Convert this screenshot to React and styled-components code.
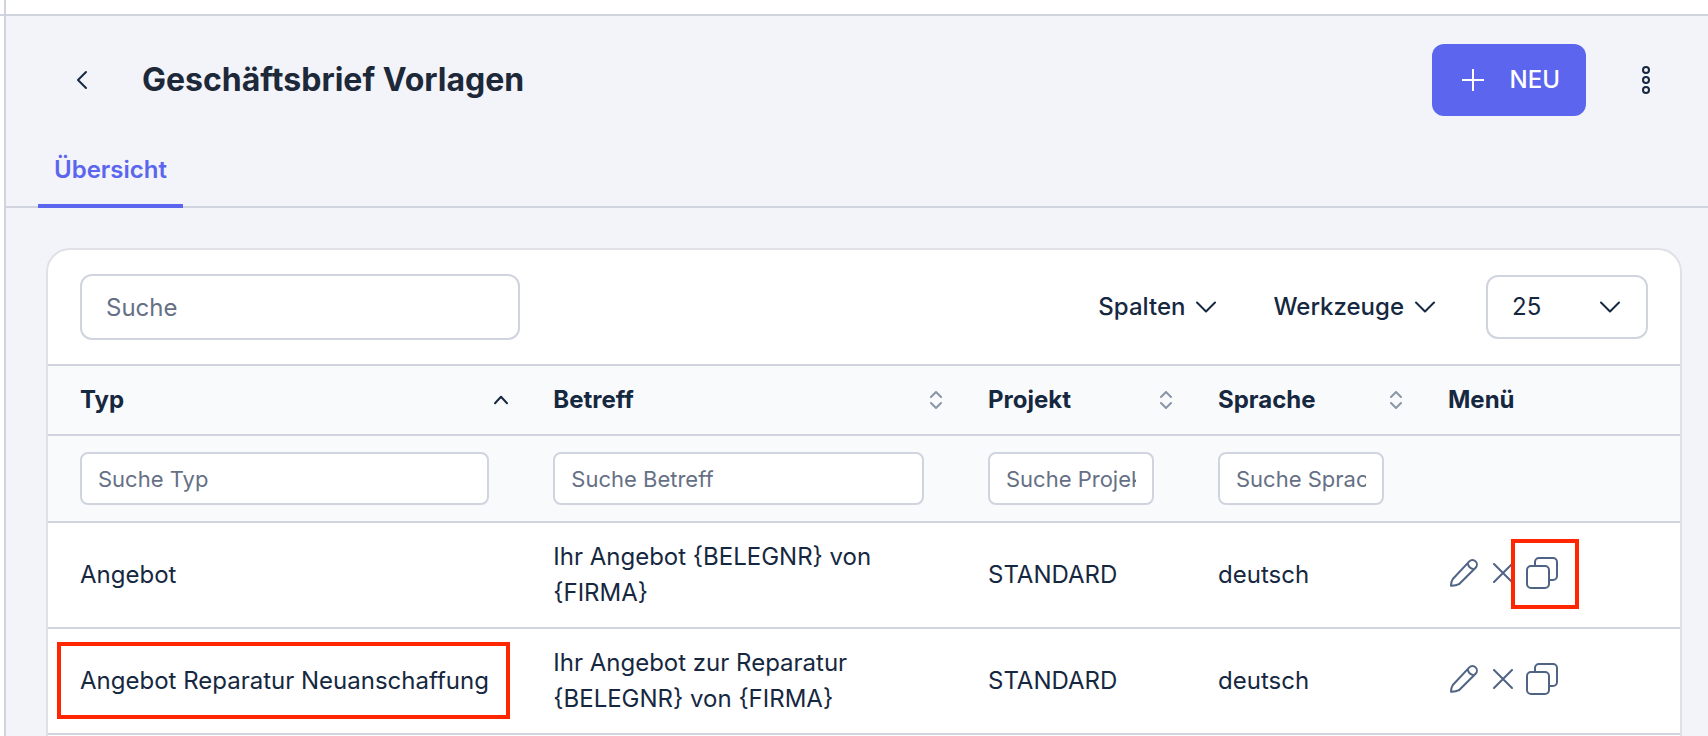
import React from "react";
import styled, { createGlobalStyle, css } from "styled-components";

const color = {
  ink: "#16283f",
  title: "#1d2939",
  accent: "#5b65ee",
  line: "#cfd4de",
  cardLine: "#dfe1e7",
  page: "#f3f4fa",
  head: "#f9fafc",
  muted: "#667085",
  sort: "#8b95a5",
  icon: "#4f6484",
  mark: "#ff2600",
};

const GlobalStyle = createGlobalStyle`
  *, *::before, *::after { box-sizing: border-box; }
  body {
    margin: 0;
    background: #fff;
    color: ${color.ink};
    font-family: Inter, "Liberation Sans", sans-serif;
    font-size: 24px;
    line-height: 36px;
    overflow: hidden;
  }
  button, input, select { font: inherit; color: inherit; }
`;

const Shell = styled.div`
  display: flex;
  flex-direction: column;
  height: 100vh;
  overflow: hidden;
`;

const TopBar = styled.div`
  flex: none;
  height: 16px;
  padding-left: 4px;
  border-bottom: 2px solid ${color.line};
  &::before {
    content: "";
    display: block;
    width: 2px;
    height: 14px;
    background: ${color.line};
  }
`;

const Main = styled.main`
  flex: 1;
  min-height: 0;
  margin-left: 4px;
  border-left: 2px solid ${color.line};
  background: ${color.page};
`;

const PageHeader = styled.header`
  display: flex;
  align-items: center;
  padding: 28px 32px 0 46px;
`;

const IconButton = styled.button`
  display: inline-flex;
  align-items: center;
  justify-content: center;
  width: 60px;
  height: 60px;
  padding: 0;
  border: 0;
  background: none;
  cursor: pointer;
`;

const Title = styled.h1`
  flex: 1;
  margin: 0 0 0 30px;
  color: ${color.title};
  font-size: 32px;
  font-weight: 700;
  line-height: 40px;
`;

const NewButton = styled.button`
  display: inline-flex;
  align-items: center;
  gap: 26px;
  height: 72px;
  margin-right: 30px;
  padding: 0 26px 0 30px;
  border: 0;
  border-radius: 12px;
  background: ${color.accent};
  color: #fff;
  font-weight: 500;
  cursor: pointer;
`;

const Tabs = styled.nav`
  display: flex;
  height: 92px;
  padding-left: 32px;
  border-bottom: 2px solid ${color.line};
`;

const Tab = styled.a`
  height: 92px;
  padding: 36px 16px 0;
  border-bottom: 4px solid ${color.accent};
  color: ${color.accent};
  font-weight: 600;
  text-decoration: none;
`;

const Card = styled.section`
  height: 640px;
  margin: 40px 26px 0 40px;
  border: 2px solid ${color.cardLine};
  border-radius: 24px;
  background: #fff;
  overflow: hidden;
`;

const Toolbar = styled.div`
  display: flex;
  align-items: center;
  padding: 24px 32px;
`;

const field = css`
  border: 2px solid ${color.line};
  background: #fff;
  outline: none;
  &::placeholder {
    color: ${color.muted};
    opacity: 1;
  }
`;

const SearchInput = styled.input`
  ${field}
  width: 440px;
  height: 66px;
  margin-right: auto;
  padding: 0 24px;
  border-radius: 12px;
`;

const MenuButton = styled.button`
  display: inline-flex;
  align-items: center;
  gap: 10px;
  margin-right: ${(p) => p.$gap}px;
  padding: 0;
  border: 0;
  background: none;
  font-weight: 500;
  cursor: pointer;
`;

const SelectBox = styled.div`
  display: grid;
  align-items: center;
  width: 162px;
  > * { grid-area: 1 / 1; }
  > svg {
    justify-self: end;
    margin-right: 27px;
    pointer-events: none;
  }
`;

const PageSize = styled.select`
  ${field}
  appearance: none;
  width: 100%;
  height: 64px;
  padding: 0 24px;
  border-radius: 12px;
`;

const Table = styled.table`
  width: 100%;
  table-layout: fixed;
  border-collapse: separate;
  border-spacing: 0;
`;

const Col = styled.col`
  width: ${(p) => p.$width};
`;

const HeadCell = styled.th`
  padding: 16px 11px 16px 32px;
  border-top: 2px solid ${color.line};
  background: ${color.head};
  font-weight: 700;
  text-align: left;
`;

const HeadLabel = styled.div`
  display: flex;
  align-items: center;
  justify-content: space-between;
`;

const SortButton = styled.button`
  display: inline-flex;
  padding: 0;
  border: 0;
  background: none;
  cursor: pointer;
`;

const FilterCell = styled.td`
  padding: 16px 32px;
  border-top: 2px solid ${color.line};
  border-bottom: 2px solid ${color.line};
  background: ${color.head};
`;

const FilterInput = styled.input`
  ${field}
  display: block;
  width: 100%;
  height: 53px;
  padding: 0 16px;
  border-radius: 8px;
  font-size: 22px;
`;

const Cell = styled.td`
  padding: 16px 32px;
  border-bottom: 2px solid ${color.line};
  white-space: ${(p) => (p.$single ? "nowrap" : "normal")};
`;

const marked = css`
  position: relative;
  &::after {
    content: "";
    position: absolute;
    inset: ${(p) => p.$inset};
    border: 4px solid ${color.mark};
    pointer-events: none;
  }
`;

const CellText = styled.span`
  display: inline-block;
  ${(p) => p.$marked && marked}
`;

const Actions = styled.div`
  display: flex;
  align-items: center;
  height: 32px;
  margin: 0 0 4px 2px;
`;

const ActionButton = styled.button`
  display: inline-flex;
  margin-right: ${(p) => p.$gap || 0}px;
  padding: 0;
  border: 0;
  background: none;
  color: ${color.icon};
  cursor: pointer;
  ${(p) => p.$marked && marked}
`;

const stroke = {
  fill: "none",
  stroke: "currentColor",
  strokeWidth: 2,
  strokeLinecap: "round",
  strokeLinejoin: "round",
  "aria-hidden": true,
};

const ChevronLeft = () => (
  <svg width="12" height="20" viewBox="0 0 12 20" {...stroke}>
    <path d="M10 2 2 10l8 8" />
  </svg>
);

const ChevronDown = () => (
  <svg width="22" height="14" viewBox="0 0 22 14" {...stroke}>
    <path d="m2 2.500 9 9 9-9" />
  </svg>
);

const Plus = () => (
  <svg width="22" height="22" viewBox="0 0 22 22" {...stroke} strokeLinecap="butt">
    <path d="M11 0v22M0 11h22" />
  </svg>
);

const Dots = () => (
  <svg width="8" height="28" viewBox="0 0 8 28" {...stroke}>
    <circle cx="4" cy="4" r="3" />
    <circle cx="4" cy="14" r="3" />
    <circle cx="4" cy="24" r="3" />
  </svg>
);

const SortIcon = ({ active }) =>
  active ? (
    <svg width="18" height="18" viewBox="0 0 18 18" {...stroke}>
      <path d="m3 12.200 6-6.400 6 6.400" />
    </svg>
  ) : (
    <svg width="18" height="18" viewBox="0 0 18 18" {...stroke} stroke={color.sort}>
      <path d="m4 6 5-5 5 5M4 12l5 5 5-5" />
    </svg>
  );

const Pencil = () => (
  <svg width="28" height="28" viewBox="0 0 28 28" {...stroke}>
    <path d="M1 26.800c0-2.400.6-5 1.800-6.800L19.300 2.400a4.400 4.400 0 0 1 6.300 6.300L9 25.200c-2 1.100-5 1.700-8 1.600ZM17.800 4.200c.4 3.200 2.600 5.400 5.800 6" />
  </svg>
);

const Cross = () => (
  <svg width="20" height="20" viewBox="0 0 20 20" {...stroke}>
    <path d="m1 1 18 18M19 1 1 19" />
  </svg>
);

const Copy = () => (
  <svg width="32" height="32" viewBox="0 0 32 32" {...stroke}>
    <rect x="1" y="9" width="22" height="22" rx="4" />
    <path d="M9 9V5a4 4 0 0 1 4-4h14a4 4 0 0 1 4 4v14a4 4 0 0 1-4 4h-4" />
  </svg>
);

const columns = [
  { label: "Typ", width: "29%", sort: "ascending" },
  { label: "Betreff", width: "auto", sort: "none" },
  { label: "Projekt", width: "230px", sort: "none" },
  { label: "Sprache", width: "230px", sort: "none" },
  { label: "Menü", width: "264px" },
];

const rows = [
  {
    typ: "Angebot",
    betreff: "Ihr Angebot {BELEGNR} von {FIRMA}",
    projekt: "STANDARD",
    sprache: "deutsch",
    markCopy: true,
  },
  {
    typ: "Angebot Reparatur Neuanschaffung",
    betreff: "Ihr Angebot zur Reparatur {BELEGNR} von {FIRMA}",
    projekt: "STANDARD",
    sprache: "deutsch",
    markTyp: true,
  },
];

export default function App() {
  return (
    <>
      <GlobalStyle />
      <Shell>
        <TopBar />
        <Main>
          <PageHeader>
            <IconButton type="button" aria-label="Zurück">
              <ChevronLeft />
            </IconButton>
            <Title>Geschäftsbrief Vorlagen</Title>
            <NewButton type="button">
              <Plus />
              NEU
            </NewButton>
            <IconButton type="button" aria-label="Weitere Aktionen">
              <Dots />
            </IconButton>
          </PageHeader>
          <Tabs>
            <Tab href="#uebersicht" aria-current="page">
              Übersicht
            </Tab>
          </Tabs>
          <Card>
            <Toolbar>
              <SearchInput type="text" placeholder="Suche" aria-label="Suche" />
              <MenuButton type="button" $gap={56}>
                Spalten
                <ChevronDown />
              </MenuButton>
              <MenuButton type="button" $gap={50}>
                Werkzeuge
                <ChevronDown />
              </MenuButton>
              <SelectBox>
                <PageSize aria-label="Einträge pro Seite" defaultValue="25">
                  <option>10</option>
                  <option>25</option>
                  <option>50</option>
                </PageSize>
                <ChevronDown />
              </SelectBox>
            </Toolbar>
            <Table>
              <colgroup>
                {columns.map((c) => (
                  <Col key={c.label} $width={c.width} />
                ))}
              </colgroup>
              <thead>
                <tr>
                  {columns.map((c) => (
                    <HeadCell key={c.label} scope="col" aria-sort={c.sort}>
                      <HeadLabel>
                        {c.label}
                        {c.sort && (
                          <SortButton type="button" aria-label={`${c.label} sortieren`}>
                            <SortIcon active={c.sort === "ascending"} />
                          </SortButton>
                        )}
                      </HeadLabel>
                    </HeadCell>
                  ))}
                </tr>
                <tr>
                  {columns.map((c) => (
                    <FilterCell key={c.label}>
                      {c.sort && (
                        <FilterInput
                          type="text"
                          placeholder={`Suche ${c.label}`}
                          aria-label={`Suche ${c.label}`}
                        />
                      )}
                    </FilterCell>
                  ))}
                </tr>
              </thead>
              <tbody>
                {rows.map((r) => (
                  <tr key={r.typ}>
                    <Cell $single>
                      <CellText $marked={r.markTyp} $inset="-21px -21px -20px -23px">
                        {r.typ}
                      </CellText>
                    </Cell>
                    <Cell>{r.betreff}</Cell>
                    <Cell>{r.projekt}</Cell>
                    <Cell>{r.sprache}</Cell>
                    <Cell>
                      <Actions>
                        <ActionButton type="button" aria-label="Bearbeiten" $gap={15}>
                          <Pencil />
                        </ActionButton>
                        <ActionButton type="button" aria-label="Löschen" $gap={13}>
                          <Cross />
                        </ActionButton>
                        <ActionButton
                          type="button"
                          aria-label="Kopieren"
                          $marked={r.markCopy}
                          $inset="-18px -21px -20px -15px"
                        >
                          <Copy />
                        </ActionButton>
                      </Actions>
                    </Cell>
                  </tr>
                ))}
              </tbody>
            </Table>
          </Card>
        </Main>
      </Shell>
    </>
  );
}
